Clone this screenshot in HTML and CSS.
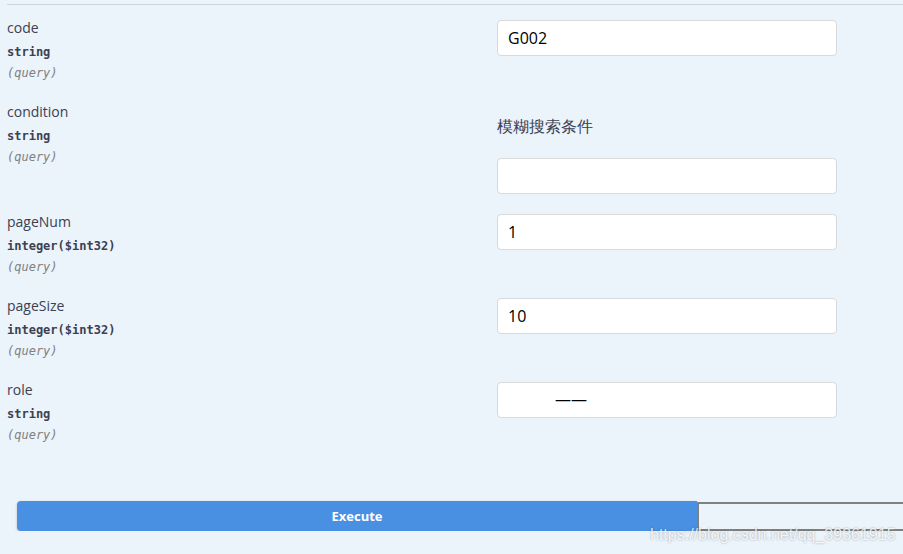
FILE: index.html
```html
<!DOCTYPE html>
<html lang="en">

<head>
    <meta charset="UTF-8">
    <meta name="viewport" content="width=device-width, initial-scale=1.0">
    <title>Parameters</title>
    <link rel="stylesheet" href="styles.css">
</head>

<body>
    <div class="opblock">
        <div class="params">
            <div class="param-row">
                <div class="param-info">
                    <div class="param-name">code</div>
                    <div class="param-type">string</div>
                    <div class="param-in">(query)</div>
                </div>
                <div class="param-value">
                    <input type="text" value="G002">
                </div>
            </div>

            <div class="param-row">
                <div class="param-info">
                    <div class="param-name">condition</div>
                    <div class="param-type">string</div>
                    <div class="param-in">(query)</div>
                </div>
                <div class="param-value">
                    <p class="param-desc">模糊搜索条件</p>
                    <input type="text" value="">
                </div>
            </div>

            <div class="param-row">
                <div class="param-info">
                    <div class="param-name">pageNum</div>
                    <div class="param-type">integer($int32)</div>
                    <div class="param-in">(query)</div>
                </div>
                <div class="param-value">
                    <input type="text" value="1">
                </div>
            </div>

            <div class="param-row">
                <div class="param-info">
                    <div class="param-name">pageSize</div>
                    <div class="param-type">integer($int32)</div>
                    <div class="param-in">(query)</div>
                </div>
                <div class="param-value">
                    <input type="text" value="10">
                </div>
            </div>

            <div class="param-row">
                <div class="param-info">
                    <div class="param-name">role</div>
                    <div class="param-type">string</div>
                    <div class="param-in">(query)</div>
                </div>
                <div class="param-value">
                    <div class="select-box">——</div>
                </div>
            </div>
        </div>

        <div class="execute-wrapper">
            <div class="btn-group">
                <button class="btn execute">Execute</button>
                <button class="btn clear"></button>
            </div>
        </div>
        <div class="watermark">https://blog.csdn.net/qq_39361915</div>
    </div>
</body>

</html>
```

FILE: styles.css
```css
body {
    margin: 0;
    background-color: #ebf3fb;
    font-family: 'Open Sans', sans-serif;
    color: #3b4151;
    overflow: hidden;
}

.opblock {
    position: relative;
    height: 554px;
    overflow: hidden;
}

.params {
    margin-left: 7px;
    margin-top: 4px;
    border-top: 1px solid #cdd4de;
    padding-top: 15px;
}

.param-row {
    display: flex;
    padding-bottom: 20px;
}

.param-info {
    width: 490px;
    min-height: 64px;
}

.param-name {
    font-size: 14px;
    line-height: 16px;
    height: 16px;
}

.param-type {
    font-family: 'DejaVu Sans Mono', monospace;
    font-size: 12px;
    font-weight: bold;
    line-height: 16px;
    margin-top: 8px;
}

.param-in {
    font-family: 'DejaVu Sans Mono', monospace;
    font-size: 12px;
    font-style: italic;
    color: #808080;
    line-height: 16px;
    margin-top: 5px;
}

.param-value {
    width: 340px;
}

.param-desc {
    margin: 12px 0 22px;
    font-size: 16px;
    line-height: 20px;
}

input,
.select-box {
    display: block;
    width: 340px;
    height: 36px;
    box-sizing: border-box;
    border: 1px solid #d9d9d9;
    border-radius: 4px;
    background: #fff;
    padding: 0 10px;
    font-family: 'Open Sans', sans-serif;
    font-size: 16px;
    color: #000;
    margin: 0;
}

.select-box {
    padding-left: 57px;
    line-height: 32px;
    font-size: 16px;
}

.execute-wrapper {
    width: 903px;
    overflow: hidden;
}

.btn-group {
    display: flex;
    margin-top: 35px;
    margin-left: 17px;
    width: 1360px;
}

.btn {
    width: 680px;
    height: 30px;
    box-sizing: border-box;
    font-family: 'Open Sans', sans-serif;
    font-size: 13px;
    font-weight: bold;
    margin: 0;
}

.execute {
    background-color: #4990e2;
    color: #fff;
    border: none;
    border-radius: 4px 0 0 4px;
    box-shadow: 0 1px 3px rgba(0, 0, 0, 0.2);
}

.clear {
    background: transparent;
    border: 2px solid #808080;
    margin-top: 1px;
    height: 29px;
}

.watermark {
    position: absolute;
    left: 650px;
    top: 526px;
    font-family: 'Liberation Sans', sans-serif;
    font-size: 16px;
    color: rgba(255, 255, 255, 0.85);
    text-shadow: 0 0 2px rgba(0, 0, 0, 0.35);
}
```
